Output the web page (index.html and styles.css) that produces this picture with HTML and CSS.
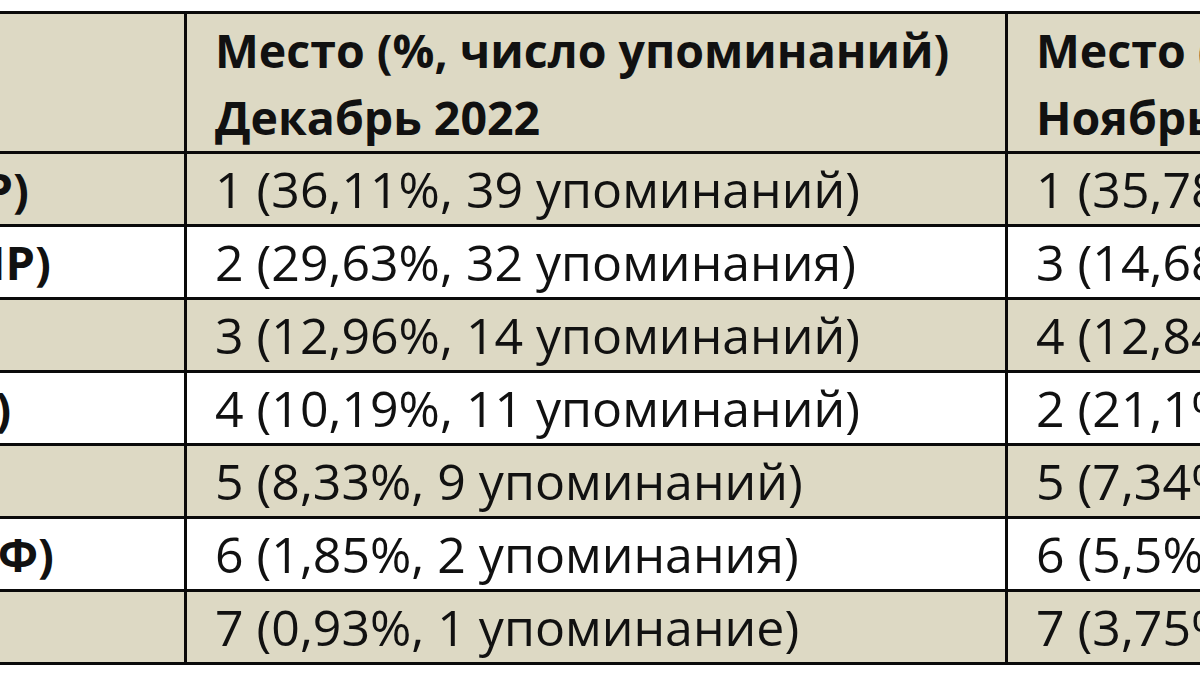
FILE: index.html
```html
<!DOCTYPE html>
<html lang="ru">
<head>
<meta charset="utf-8">
<title>Рейтинг упоминаний</title>
<link rel="stylesheet" href="styles.css">
</head>
<body>
<div class="viewport">
  <div class="sheet">
    <div class="cell head name"></div>
    <div class="cell head"><span>Место (%, число упоминаний)</span><span>Декабрь 2022</span></div>
    <div class="cell head"><span>Место (%, число упоминаний)</span><span>Ноябрь 2022</span></div>

    <div class="cell name tan">Вячеслав Володин (ЕР)</div>
    <div class="cell tan">1 (36,11%, 39 упоминаний)</div>
    <div class="cell tan">1 (35,78%, 39 упоминаний)</div>

    <div class="cell name">Василий Власов (ЛДПР)</div>
    <div class="cell">2 (29,63%, 32 упоминания)</div>
    <div class="cell">3 (14,68%, 16 упоминаний)</div>

    <div class="cell name tan">Сергей Миронов</div>
    <div class="cell tan">3 (12,96%, 14 упоминаний)</div>
    <div class="cell tan">4 (12,84%, 14 упоминаний)</div>

    <div class="cell name">Ольга Тимофеева (ЕР)</div>
    <div class="cell">4 (10,19%, 11 упоминаний)</div>
    <div class="cell">2 (21,1%, 23 упоминания)</div>

    <div class="cell name tan">Алексей Нечаев</div>
    <div class="cell tan">5 (8,33%, 9 упоминаний)</div>
    <div class="cell tan">5 (7,34%, 8 упоминаний)</div>

    <div class="cell name">Георгий Камнев (КПРФ)</div>
    <div class="cell">6 (1,85%, 2 упоминания)</div>
    <div class="cell">6 (5,5%, 6 упоминаний)</div>

    <div class="cell name tan">Дмитрий Медведев</div>
    <div class="cell tan">7 (0,93%, 1 упоминание)</div>
    <div class="cell tan">7 (3,75%, 4 упоминания)</div>
  </div>
</div>
</body>
</html>
```
FILE: styles.css
```css
html, body {
  margin: 0;
  padding: 0;
  background: #ffffff;
}

.viewport {
  width: 1200px;
  height: 675px;
  overflow: hidden;
  padding-top: 11px;
  box-sizing: border-box;
}

.sheet {
  display: grid;
  grid-template-columns: 742px 818px 600px;
  grid-template-rows: 137px repeat(7, 70px);
  gap: 3px;
  background: #0a0a0a;
  border: 3px solid #0a0a0a;
  margin-left: -561px;
  width: max-content;
  font-family: "Open Sans", "Noto Sans", sans-serif;
  color: #111111;
}

.cell {
  background: #ffffff;
  display: flex;
  align-items: center;
  padding-left: 28px;
  white-space: nowrap;
  overflow: hidden;
  font-size: 50px;
  font-weight: 400;
}

.tan {
  background: #ddd9c4;
}

.name {
  font-weight: 700;
  font-size: 47px;
}

.head {
  background: #ddd9c4;
  flex-direction: column;
  align-items: flex-start;
  justify-content: flex-start;
  padding-top: 3px;
  font-size: 46.5px;
  font-weight: 700;
  line-height: 67px;
}
```
